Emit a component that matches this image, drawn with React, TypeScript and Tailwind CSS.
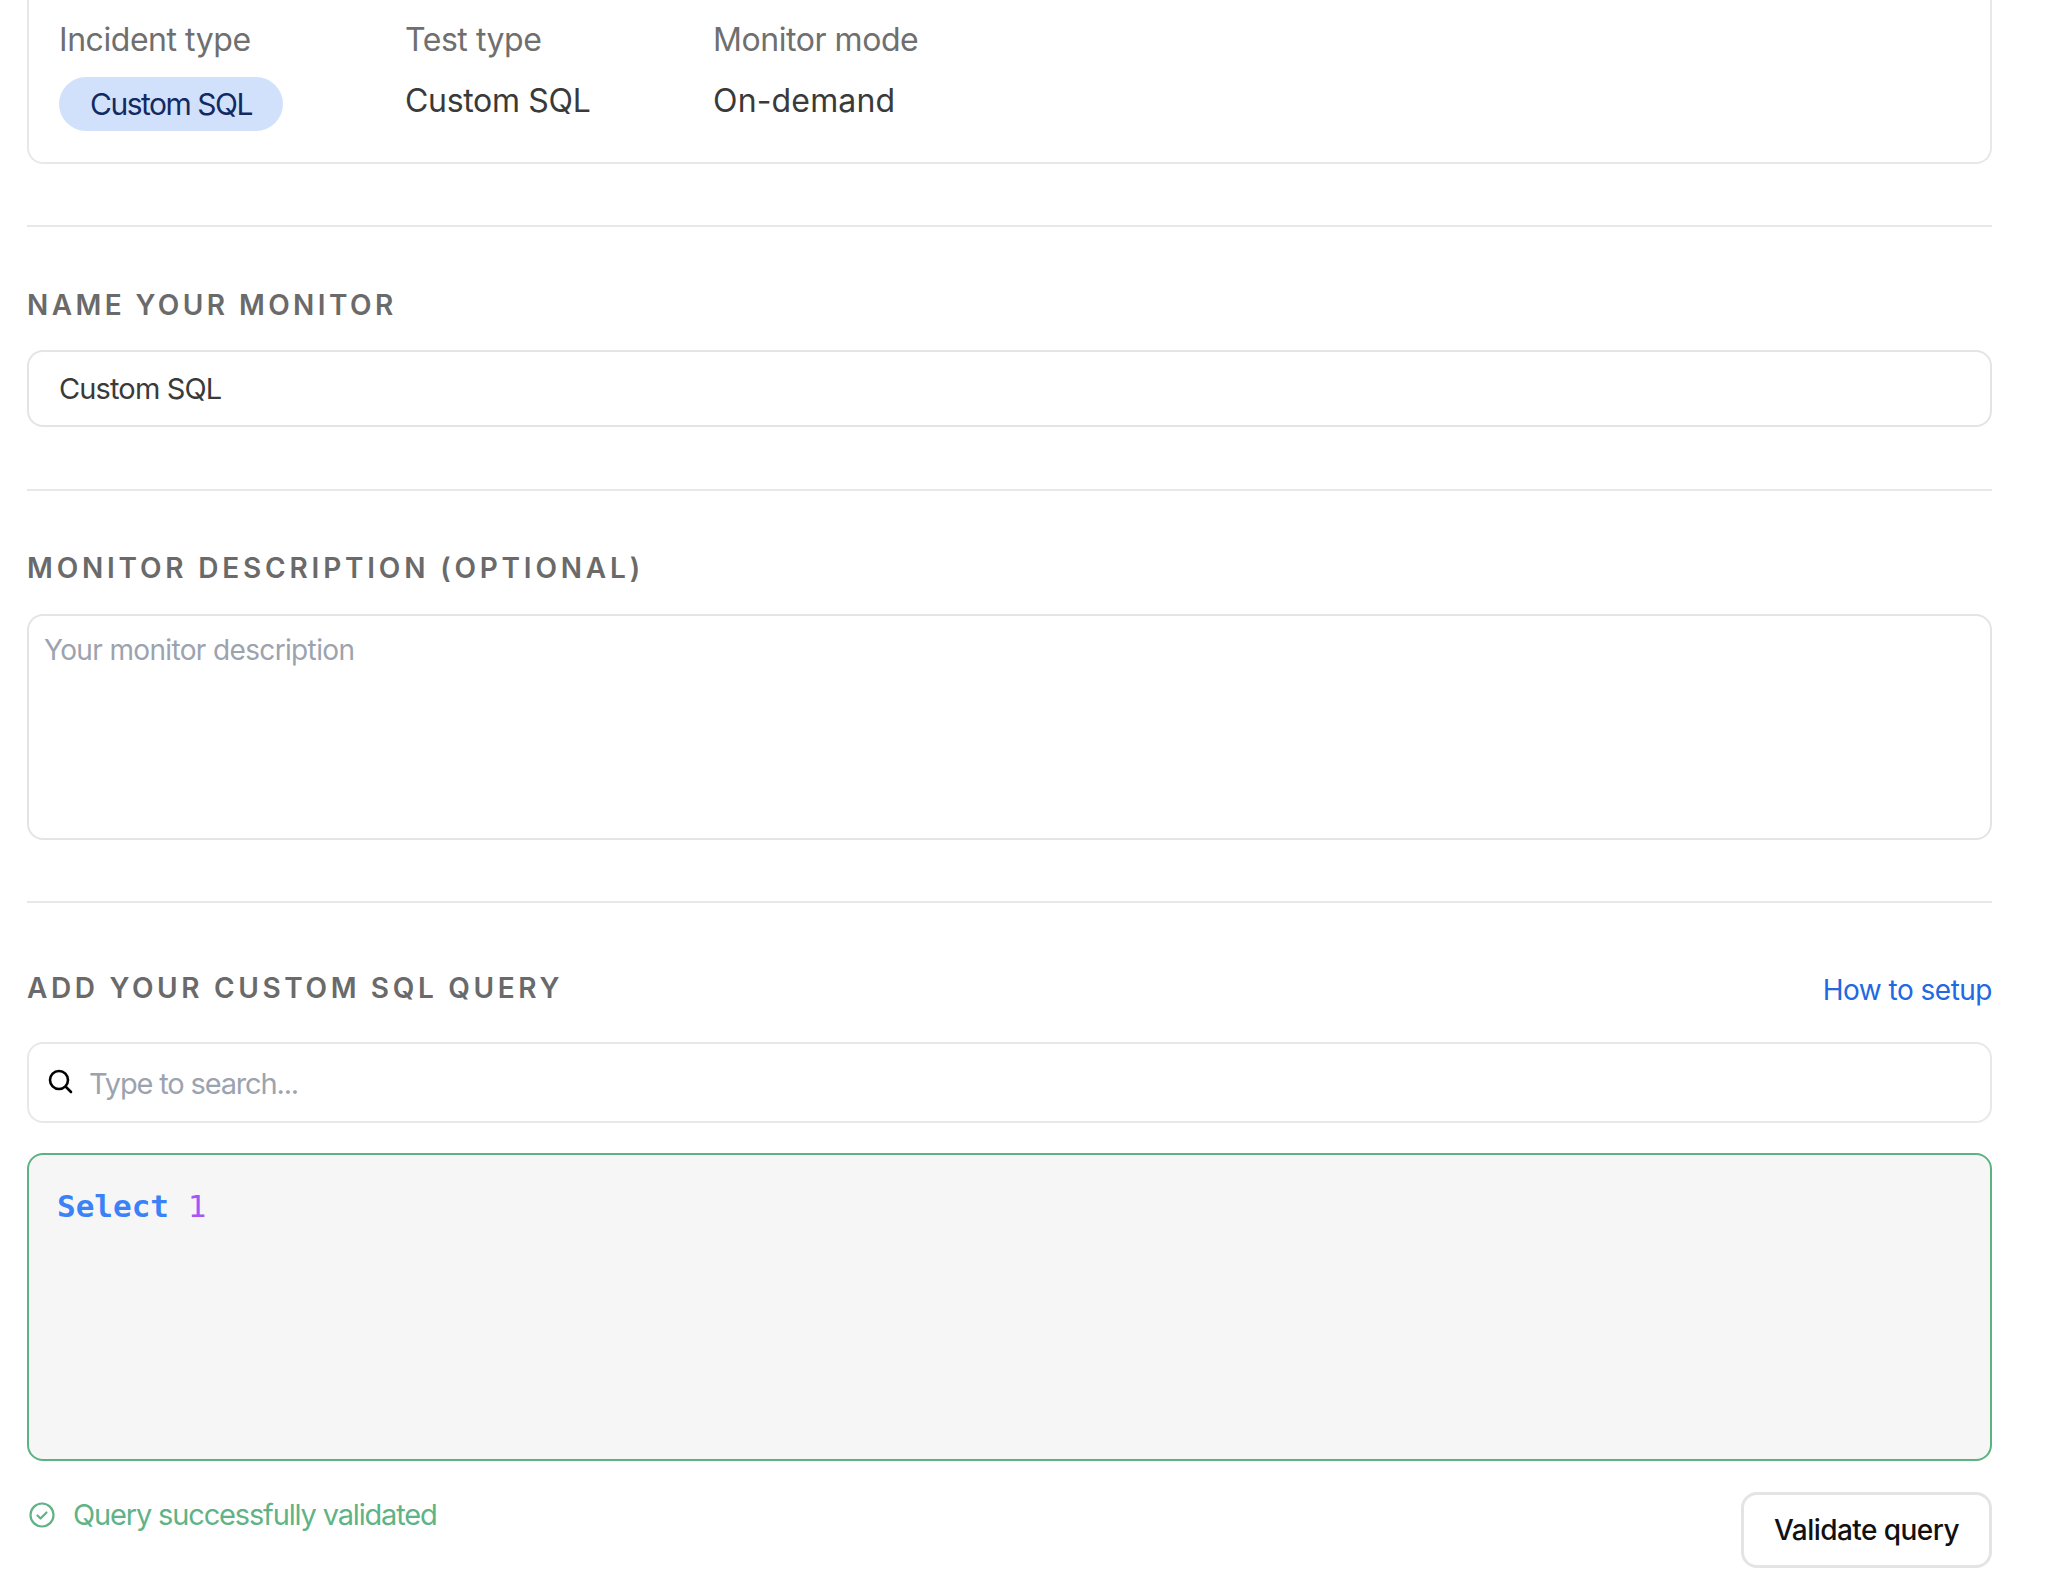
import React from "react";

const font = "[font-family:Inter,'Liberation_Sans',sans-serif]";

function Heading({ children, tracking }: { children: React.ReactNode; tracking: string }) {
  return (
    <h2 className={`m-0 text-[28px] leading-[34px] font-semibold text-[#6a6a6a] whitespace-nowrap ${tracking}`}>
      {children}
    </h2>
  );
}

function Divider() {
  return <div className="h-[2px] bg-[#e8e8e8]" />;
}

function Field({ label, children, x }: { label: string; children: React.ReactNode; x: string }) {
  return (
    <div className={`flex flex-col ${x}`}>
      <div className="text-[32px] leading-[40px] tracking-[-0.014em] text-[#6f6f6f] whitespace-nowrap">{label}</div>
      {children}
    </div>
  );
}

export default function App() {
  return (
    <div className={`${font} w-[2048px] h-[1585px] bg-white overflow-hidden pl-[27px] pr-[56px]`}>
      <div className="h-[164px] border-x-2 border-b-2 border-[#e8e8e8] rounded-b-[16px] pl-[30px] pt-[20px] flex">
        <Field label="Incident type" x="w-[346px]">
          <div className="mt-[17px] w-[224px] h-[54px] rounded-full bg-[#d2e1fb] flex items-center justify-center text-[30px] tracking-[-0.05em] text-[#122a63] whitespace-nowrap">
            Custom SQL
          </div>
        </Field>
        <Field label="Test type" x="w-[308px]">
          <div className="mt-[21px] text-[32px] leading-[40px] tracking-[-0.01em] text-[#3a3a3a] whitespace-nowrap">Custom SQL</div>
        </Field>
        <Field label="Monitor mode" x="">
          <div className="mt-[21px] text-[32px] leading-[40px] tracking-[0.005em] text-[#3a3a3a] whitespace-nowrap">On-demand</div>
        </Field>
      </div>

      <div className="mt-[61px]"><Divider /></div>

      <div className="mt-[61px]"><Heading tracking="tracking-[0.122em]">NAME YOUR MONITOR</Heading></div>
      <div className="mt-[28px] h-[77px] border-2 border-[#e4e4e4] rounded-[16px] pl-[30px] flex items-center text-[29px] tracking-[-0.03em] text-[#3a3a3a]">
        Custom SQL
      </div>

      <div className="mt-[62px]"><Divider /></div>

      <div className="mt-[60px]"><Heading tracking="tracking-[0.136em]">MONITOR DESCRIPTION (OPTIONAL)</Heading></div>
      <div className="mt-[29px] h-[226px] border-2 border-[#e4e4e4] rounded-[16px] pl-[15px] pt-[16px] text-[28px] leading-[36px] tracking-[-0.023em] text-[#9ca3af]">
        Your monitor description
      </div>

      <div className="mt-[61px]"><Divider /></div>

      <div className="mt-[68px] h-[34px] flex items-start justify-between">
        <Heading tracking="tracking-[0.13em]">ADD YOUR CUSTOM SQL QUERY</Heading>
        <a className="mt-[2px] text-[28px] leading-[34px] tracking-[-0.018em] text-[#2268e0]">How to setup</a>
      </div>

      <div className="mt-[37px] h-[81px] border-2 border-[#e8e8e8] rounded-[16px] pl-[18px] flex items-center gap-[16px]">
        <svg className="mb-[3px]" width="26" height="26" viewBox="0 0 26 26" fill="none" stroke="#000" strokeWidth="2.6" strokeLinecap="round">
          <circle cx="12" cy="12" r="9" />
          <path d="M19 19l5 5" />
        </svg>
        <span className="mt-[2px] text-[29px] tracking-[-0.04em] text-[#9ca3af]">Type to search...</span>
      </div>

      <div className="mt-[30px] h-[308px] border-2 border-[#5bb381] rounded-[16px] bg-[#f6f6f6] pl-[28px] pt-[30px] [font-family:'DejaVu_Sans_Mono',monospace] text-[31px] leading-[42px]">
        <span className="font-bold text-[#3b82f6]">Select</span> <span className="text-[#a855f7]">1</span>
      </div>

      <div className="mt-[31px] flex justify-between items-start">
        <div className="flex items-center gap-[18px] mt-[5px] pl-[2px]">
          <svg width="26" height="26" viewBox="0 0 26 26" fill="none" stroke="#5fb386" strokeWidth="2.2" strokeLinecap="round" strokeLinejoin="round">
            <circle cx="13" cy="13" r="11.5" />
            <path d="M8.5 13.5l3 3 6-6" />
          </svg>
          <span className="text-[29px] leading-[36px] tracking-[-0.04em] text-[#5fb386]">Query successfully validated</span>
        </div>
        <button className="w-[251px] h-[76px] border-[3px] border-[#e4e4e4] rounded-[16px] bg-white text-[28px] font-medium tracking-[-0.02em] text-[#111111]">
          Validate query
        </button>
      </div>
    </div>
  );
}
